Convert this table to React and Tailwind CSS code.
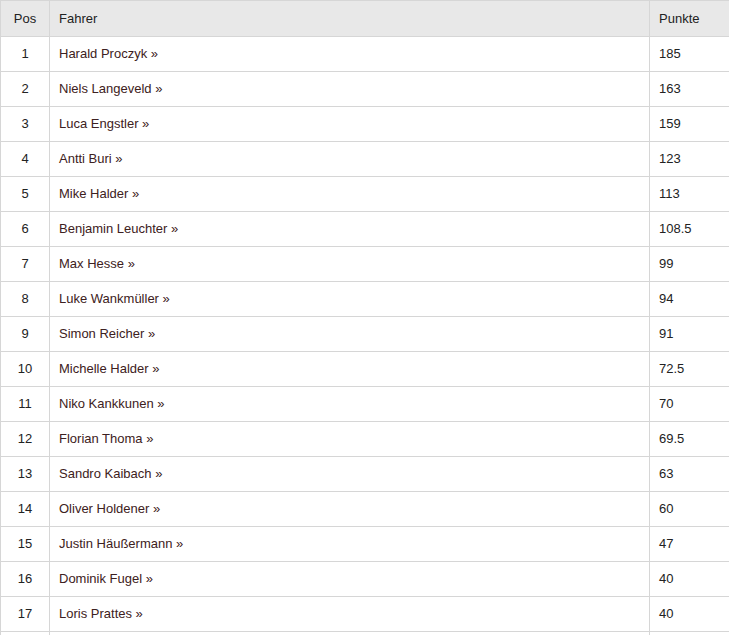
import React from "react";

const rows = [
  [1, "Harald Proczyk", "185"],
  [2, "Niels Langeveld", "163"],
  [3, "Luca Engstler", "159"],
  [4, "Antti Buri", "123"],
  [5, "Mike Halder", "113"],
  [6, "Benjamin Leuchter", "108.5"],
  [7, "Max Hesse", "99"],
  [8, "Luke Wankmüller", "94"],
  [9, "Simon Reicher", "91"],
  [10, "Michelle Halder", "72.5"],
  [11, "Niko Kankkunen", "70"],
  [12, "Florian Thoma", "69.5"],
  [13, "Sandro Kaibach", "63"],
  [14, "Oliver Holdener", "60"],
  [15, "Justin Häußermann", "47"],
  [16, "Dominik Fugel", "40"],
  [17, "Loris Prattes", "40"],
];

export default function App() {
  return (
    <div className="bg-white w-[729px] h-[635px] overflow-hidden font-['Liberation_Sans',Arial,sans-serif] text-[13px] text-[#222]">
      <table className="w-[729px] border-collapse table-fixed">
        <colgroup>
          <col className="w-[49px]" />
          <col className="w-[600px]" />
          <col className="w-[80px]" />
        </colgroup>
        <thead>
          <tr className="bg-[#e8e8e8] h-[36px]">
            <th className="border border-[#d6d6d6] font-normal text-center">Pos</th>
            <th className="border border-[#d6d6d6] font-normal text-left pl-[9px]">Fahrer</th>
            <th className="border border-[#d6d6d6] font-normal text-left pl-[9px]">Punkte</th>
          </tr>
        </thead>
        <tbody>
          {rows.map(([pos, name, pts]) => (
            <tr key={pos} className="h-[35px]">
              <td className="border border-[#d6d6d6] text-center">{pos}</td>
              <td className="border border-[#d6d6d6] pl-[9px]">
                <a className="text-[#3d2121] cursor-pointer">{name} »</a>
              </td>
              <td className="border border-[#d6d6d6] pl-[9px]">{pts}</td>
            </tr>
          ))}
          {/* next row, only its top edge shows */}
          <tr className="h-[35px]">
            <td className="border border-[#d6d6d6]"></td>
            <td className="border border-[#d6d6d6]"></td>
            <td className="border border-[#d6d6d6]"></td>
          </tr>
        </tbody>
      </table>
    </div>
  );
}
